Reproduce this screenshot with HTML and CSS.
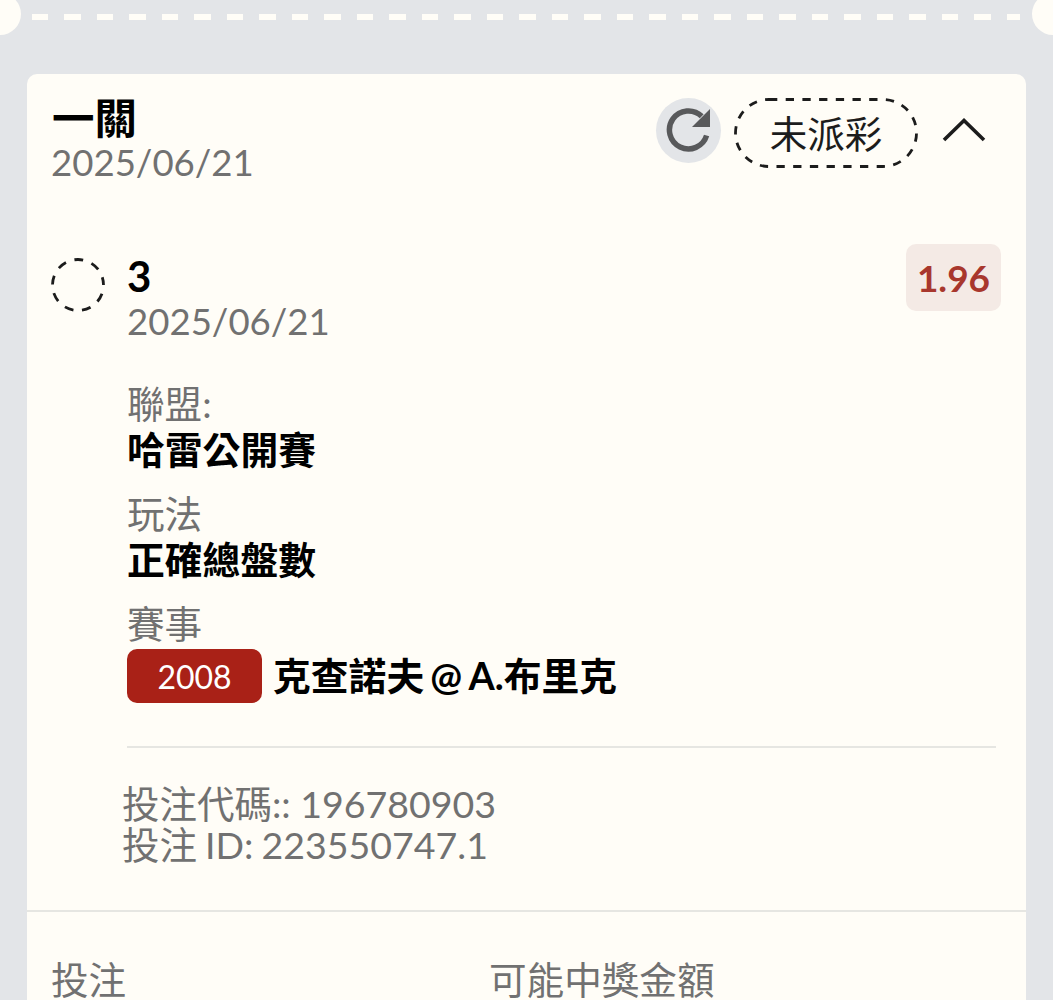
FILE: index.html
```html
<!DOCTYPE html>
<html lang="zh-Hant">

<head>
    <meta charset="UTF-8">
    <meta name="viewport" content="width=device-width, initial-scale=1.0">
    <title>投注詳情</title>
    <link rel="stylesheet" href="styles.css">
</head>

<body>
    <div class="tear">
        <span class="notch notch_left"></span>
        <div class="tear_line"></div>
        <span class="notch notch_right"></span>
    </div>

    <div class="card">
        <div class="card_head">
            <div class="head_text">
                <h2>一關</h2>
                <p class="date">2025/06/21</p>
            </div>
            <div class="head_tools">
                <span class="refresh">
                    <svg width="48" height="48" viewBox="0 0 48 48">
                        <path d="M36.7 9.3A19 19 0 1 0 41.6 28.5" fill="none" stroke="#58595b" stroke-width="5.5" />
                        <path d="M45 2v18H27z" fill="#58595b" />
                    </svg>
                </span>
                <span class="status">
                    <svg class="status_border" width="184" height="70" viewBox="0 0 184 70">
                        <rect x="1.5" y="1.5" width="181" height="67" rx="33.5" fill="none" stroke="#1c1c1c" stroke-width="2.8" stroke-dasharray="8.3 8.4" />
                    </svg>
                    未派彩
                </span>
                <svg class="chevron" width="44" height="24" viewBox="0 0 44 24">
                    <path d="M2 22L22 2.5 42 22" fill="none" stroke="#1c1c1c" stroke-width="3.6" />
                </svg>
            </div>
        </div>

        <div class="leg">
            <svg class="leg_mark" width="54" height="54" viewBox="0 0 54 54">
                <circle cx="27" cy="27" r="25.5" fill="none" stroke="#1c1c1c" stroke-width="2.8" stroke-dasharray="9 8.8" stroke-dashoffset="8.9" />
            </svg>
            <div class="leg_main">
                <div class="leg_top">
                    <div class="leg_title">
                        <h3>3</h3>
                        <p class="date">2025/06/21</p>
                    </div>
                    <span class="odds">1.96</span>
                </div>
                <div class="field">
                    <p class="label">聯盟:</p>
                    <p class="value">哈雷公開賽</p>
                </div>
                <div class="field">
                    <p class="label">玩法</p>
                    <p class="value">正確總盤數</p>
                </div>
                <div class="field">
                    <p class="label">賽事</p>
                    <div class="match">
                        <span class="match_no">2008</span>
                        <span class="value match_name">克查諾夫 @ A.布里克</span>
                    </div>
                </div>
                <div class="leg_ids">
                    <p>投注代碼:: 196780903</p>
                    <p class="id_line">投注 ID: 223550747.1</p>
                </div>
            </div>
        </div>

        <div class="card_foot">
            <p class="foot_col">投注</p>
            <p class="foot_col">可能中獎金額</p>
        </div>
    </div>
</body>

</html>
```

FILE: styles.css
```css
* {
    padding: 0;
    margin: 0;
    box-sizing: border-box;
}

html,
body {
    height: 1000px;
    overflow: hidden;
}

body {
    background: #e3e5e8;
    font-family: "Lato", "Noto Sans CJK TC", sans-serif;
    color: #000;
}

/* 撕票虛線 */
.tear {
    height: 74px;
    position: relative;
    padding: 14px 33px 0 32px;
}

.tear_line {
    height: 6px;
    background: repeating-linear-gradient(90deg, #fffdf7 0, #fffdf7 16px, transparent 16px, transparent 32.5px);
}

.notch {
    width: 42px;
    height: 42px;
    border-radius: 50%;
    background: #fffdf7;
    position: absolute;
    top: -7px;
}

.notch_left {
    left: -21px;
}

.notch_right {
    right: -21px;
}

.card {
    margin: 0 27px;
    height: 926px;
    background: #fffdf7;
    border-radius: 10px 10px 0 0;
}

.card_head {
    display: flex;
    justify-content: space-between;
    padding: 20px 40px 0 24px;
    height: 170px;
}

h2 {
    font-size: 42.5px;
    line-height: 47px;
    padding-left: 1px;
}

.date {
    font-size: 36.6px;
    line-height: 42px;
    color: #717171;
}

.head_tools {
    display: flex;
    align-items: center;
    height: 70px;
    margin-top: 4px;
}

.refresh {
    width: 65px;
    height: 65px;
    border-radius: 50%;
    background: #e3e5e8;
    display: flex;
    align-items: center;
    justify-content: center;
    margin: 0 13px 5px 0;
}

.status {
    width: 184px;
    height: 70px;
    position: relative;
    display: flex;
    align-items: center;
    justify-content: center;
    padding-bottom: 3px;
    font-size: 37.5px;
    color: #1c1c1c;
    margin-right: 24px;
}

.status_border {
    position: absolute;
    top: 0;
    left: 0;
}

.chevron {
    margin-bottom: 7px;
}

.leg {
    display: flex;
    padding: 0 25px 0 24px;
}

.leg_mark {
    margin-top: 14px;
    flex: none;
}

.leg_main {
    flex: 1;
    margin-left: 22px;
}

.leg_top {
    display: flex;
    justify-content: space-between;
    align-items: flex-start;
    margin-bottom: 39px;
}

.leg_title {
    padding-top: 9px;
}

h3 {
    font-size: 42px;
    line-height: 47px;
}

.odds {
    width: 95px;
    height: 67px;
    background: #f4eae5;
    border-radius: 10px;
    color: #a8372d;
    font-size: 37px;
    font-weight: 700;
    display: flex;
    align-items: center;
    justify-content: center;
}

.field {
    margin-top: 18px;
}

.label {
    font-size: 37.6px;
    line-height: 46px;
    color: #717171;
}

.value {
    font-size: 37.8px;
    line-height: 46px;
    font-weight: 700;
}

.match {
    display: flex;
    align-items: center;
    gap: 11px;
    margin-top: 2px;
}

.match_no {
    width: 135px;
    height: 54px;
    background: #a92117;
    border-radius: 10px;
    color: #fff;
    font-size: 32px;
    display: flex;
    align-items: center;
    justify-content: center;
}

.match_name {
    word-spacing: -3px;
}

.leg_ids {
    margin: 43px 5px 0 0;
    border-top: 2px solid #e6e6e2;
    padding-top: 35px;
    font-size: 37.5px;
    line-height: 41px;
    color: #717171;
    height: 164px;
    text-indent: -5px;
}

.id_line {
    word-spacing: -1.5px;
}

.card_foot {
    display: flex;
    border-top: 2px solid #e6e6e2;
    padding: 45px 24px 0;
}

.foot_col {
    width: 438px;
    font-size: 37.6px;
    line-height: 46px;
    color: #717171;
}
```
